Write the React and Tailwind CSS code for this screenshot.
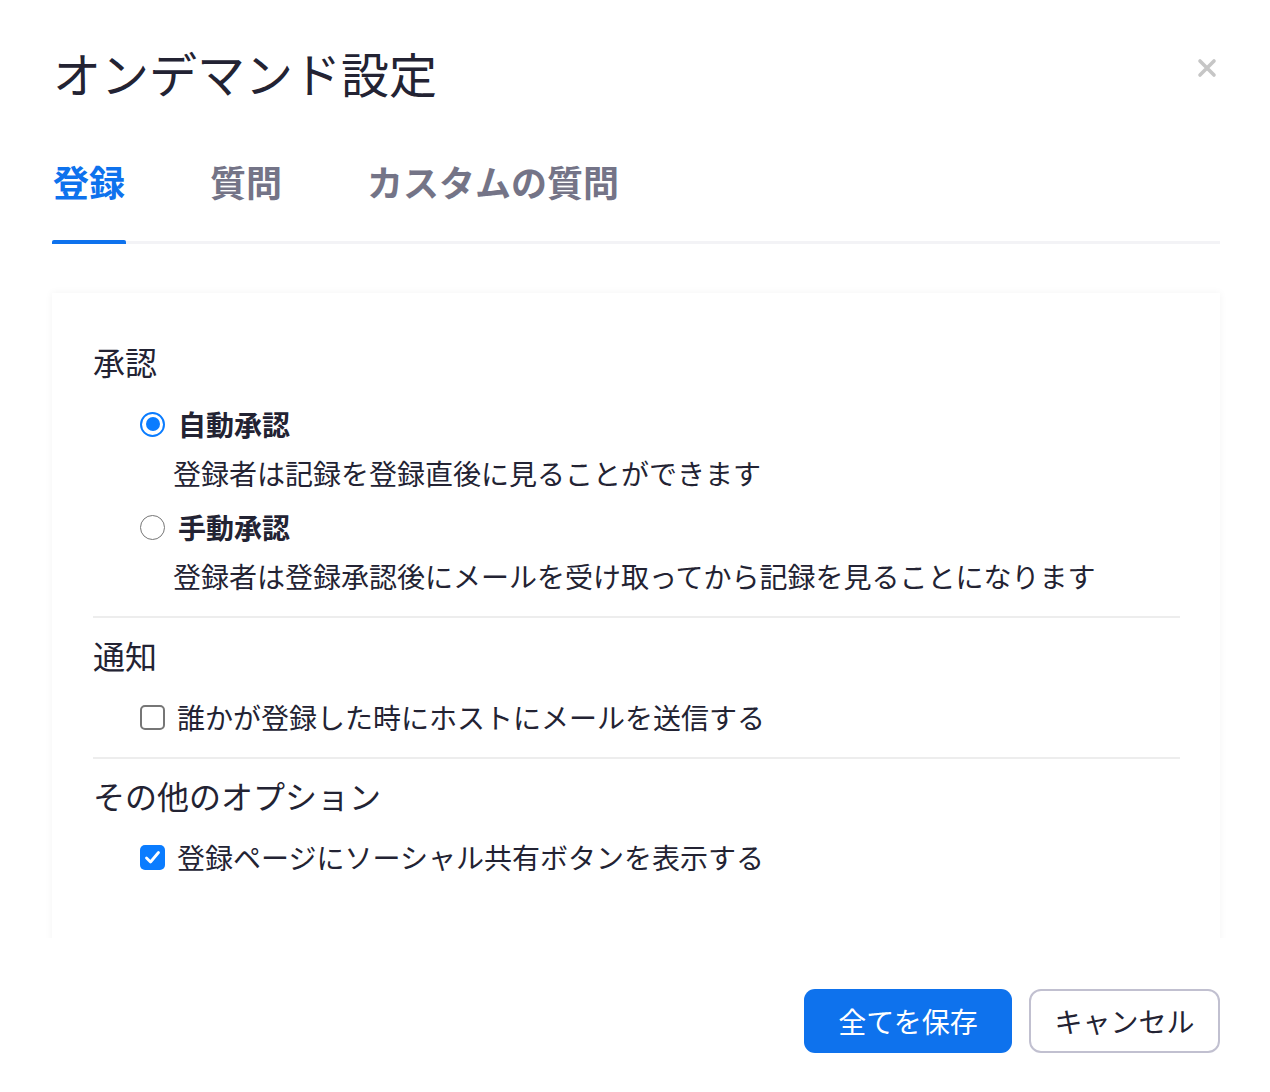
export default function App() {
  const font = { fontFamily: '"Noto Sans CJK JP", "Noto Sans", sans-serif' };
  return (
    <div className="w-[1270px] h-[1092px] bg-white text-[#232333] overflow-hidden" style={font}>
      <div className="pl-[53px] pr-[50px]">
        {/* Title */}
        <div className="flex items-start justify-between pt-[48px]">
          <h1 className="text-[48px] leading-[48px] font-normal tracking-[0px]">オンデマンド設定</h1>
          <div className="mt-[10px] mr-[3px]">
            <svg width="20" height="20" viewBox="0 0 20 20">
              <path d="M3 3 L17 17 M17 3 L3 17" stroke="#c6c6c6" strokeWidth="3.6" strokeLinecap="round" />
            </svg>
          </div>
        </div>

        {/* Tabs */}
        <div className="mt-[67px] relative">
          <div className="flex gap-[85px]">
            <div className="flex flex-col">
              <span className="text-[36px] leading-[36px] font-bold text-[#0e72ed]">登録</span>
              <div className="mt-[41px] h-[4px] bg-[#0e72ed] rounded-t-[2px] relative z-10 -mx-[1px]" />
            </div>
            <span className="text-[36px] leading-[36px] font-bold text-[#747487]">質問</span>
            <span className="text-[36px] leading-[36px] font-bold text-[#747487]">カスタムの質問</span>
          </div>
          <div className="absolute left-0 right-0 bottom-0 h-[3px] bg-[#f3f3f6]" />
        </div>
      </div>

      {/* Card area */}
      <div className="mt-[37px] h-[657px] overflow-hidden pl-[52px] pr-[50px] pt-[12px]">
        <div className="bg-white shadow-[0_0_8px_rgba(0,0,0,0.05)] pl-[41px] pr-[40px] pt-[52px] pb-[80px]">
          <div className="text-[32px] leading-[32px]">承認</div>

          <div className="mt-[33px] ml-[47px] flex items-center h-[28px]">
            <span className="w-[25px] h-[25px] rounded-full border-[2.5px] border-[#0a7cff] flex items-center justify-center shrink-0">
              <span className="w-[14px] h-[14px] rounded-full bg-[#0a7cff]" />
            </span>
            <span className="ml-[13px] text-[28px] leading-[28px] font-bold">自動承認</span>
          </div>
          <div className="mt-[21px] ml-[80px] text-[28px] leading-[28px]">登録者は記録を登録直後に見ることができます</div>

          <div className="mt-[26px] ml-[47px] flex items-center h-[28px]">
            <span className="w-[25px] h-[25px] rounded-full border-[1.5px] border-[#767676] shrink-0" />
            <span className="ml-[13px] text-[28px] leading-[28px] font-bold">手動承認</span>
          </div>
          <div className="mt-[21px] ml-[80px] text-[28px] leading-[28px]">登録者は登録承認後にメールを受け取ってから記録を見ることになります</div>

          <div className="mt-[26px] h-[2px] bg-[#ededed]" />

          <div className="mt-[21px] text-[32px] leading-[32px]">通知</div>
          <div className="mt-[32px] ml-[47px] flex items-center h-[28px]">
            <span className="w-[25px] h-[25px] rounded-[5px] border-[2px] border-[#767676] shrink-0" />
            <span className="ml-[12px] text-[28px] leading-[28px]">誰かが登録した時にホストにメールを送信する</span>
          </div>

          <div className="mt-[26px] h-[2px] bg-[#ededed]" />

          <div className="mt-[20px] text-[32px] leading-[32px]">その他のオプション</div>
          <div className="mt-[32px] ml-[47px] flex items-center h-[28px]">
            <span className="w-[25px] h-[25px] rounded-[5px] bg-[#0a7cff] flex items-center justify-center shrink-0">
              <svg width="17" height="17" viewBox="0 0 17 17">
                <path d="M2.5 9 L6.5 13 L14.5 3.5" stroke="white" strokeWidth="2.8" fill="none" strokeLinecap="round" strokeLinejoin="round" />
              </svg>
            </span>
            <span className="ml-[12px] text-[28px] leading-[28px]">登録ページにソーシャル共有ボタンを表示する</span>
          </div>
        </div>
      </div>

      {/* Buttons */}
      <div className="mt-[51px] pr-[50px] flex justify-end gap-[17px]">
        <button className="w-[208px] h-[64px] rounded-[11px] bg-[#0e72ed] text-white text-[28px] leading-[28px]" style={font}>全てを保存</button>
        <button className="w-[191px] h-[64px] rounded-[12px] border-[2px] border-[#c1c0d0] bg-white text-[#232333] text-[28px] leading-[28px]" style={font}>キャンセル</button>
      </div>
    </div>
  );
}
